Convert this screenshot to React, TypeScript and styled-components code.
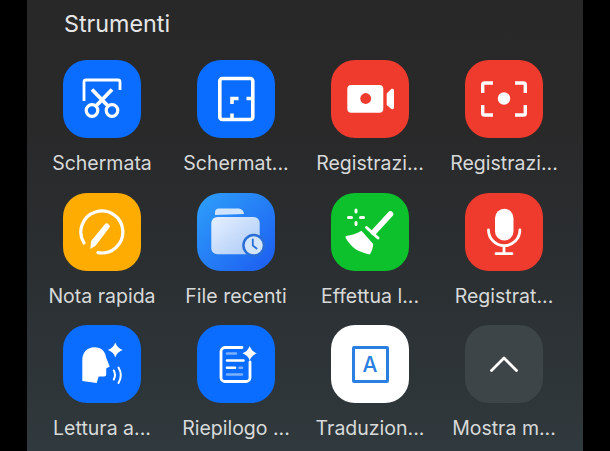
import React from "react";
import styled, { createGlobalStyle } from "styled-components";

const Global = createGlobalStyle`
  html, body { margin: 0; padding: 0; background: #000; }
  #root { width: 610px; height: 451px; overflow: hidden; }
`;

const Page = styled.div`
  width: 610px;
  height: 451px;
  background: #000;
  display: flex;
  padding-left: 27px;
  box-sizing: border-box;
  font-family: Inter, "Liberation Sans", sans-serif;
`;

const Panel = styled.main`
  width: 556px;
  height: 451px;
  box-sizing: border-box;
  padding: 9px 8px 0;
  background: linear-gradient(180deg, #282828 0%, #29292a 30%, #2b3033 65%, #30393d 100%);
  overflow: hidden;
`;

const Title = styled.h2`
  margin: 0 0 0 29px;
  height: 29px;
  font-size: 23.3px;
  line-height: 29px;
  font-weight: 400;
  color: #e6e6e6;
`;

const Grid = styled.div`
  margin-top: 22px;
  display: grid;
  grid-template-columns: repeat(4, 134px);
  grid-auto-rows: 132.5px;
`;

const Tool = styled.div`
  display: flex;
  flex-direction: column;
  align-items: center;
`;

const IconTile = styled.div<{ $bg: string }>`
  width: 78px;
  height: 78px;
  border-radius: 24px;
  background: ${(p) => p.$bg};
  display: flex;
  align-items: center;
  justify-content: center;
`;

const Glyph = styled.svg`
  width: 78px;
  height: 78px;
  display: block;
`;

const Label = styled.span`
  margin-top: 13px;
  font-size: 19.5px;
  line-height: 24px;
  color: #d8dada;
  white-space: nowrap;
`;

const TranslateBox = styled.div`
  width: 37px;
  height: 37px;
  box-sizing: border-box;
  border: 3px solid #2a7fe0;
  border-radius: 2px;
  display: flex;
  align-items: center;
  justify-content: center;
  color: #2a7fe0;
  font-size: 21px;
  font-weight: 500;
`;

const W = "#fff";

const Sparkle = ({ x, y, r }: { x: number; y: number; r: number }) => (
  <path
    fill={W}
    d={`M${x} ${y - r}Q${x + r * 0.25} ${y - r * 0.25} ${x + r} ${y}Q${x + r * 0.25} ${y + r * 0.25} ${x} ${y + r}Q${x - r * 0.25} ${y + r * 0.25} ${x - r} ${y}Q${x - r * 0.25} ${y - r * 0.25} ${x} ${y - r}Z`}
  />
);

const Scissors = () => (
  <Glyph viewBox="0 0 78 78" fill="none" stroke={W} strokeWidth={2.8}>
    <path d="M21 41V22a2 2 0 0 1 2-2h32a2 2 0 0 1 2 2v8" />
    <circle cx="29" cy="50.500" r="5.800" strokeWidth={3.200} />
    <circle cx="49" cy="50.500" r="5.800" strokeWidth={3.200} />
    <path d="M29 29.500 45.500 46.500M49 29.500 32.500 46.500" strokeWidth={3.800} />
  </Glyph>
);

const FloorPlan = () => (
  <Glyph viewBox="0 0 78 78" fill="none" stroke={W} strokeWidth={3.600}>
    <rect x="22.800" y="18.500" width="33" height="41" rx="2.500" />
    <path d="M35 44V38.500H41.500M49.500 38.500H56M35 53.500V60" />
  </Glyph>
);

const Camera = () => (
  <Glyph viewBox="0 0 78 78">
    <rect x="16.300" y="25" width="36" height="27.700" rx="4" fill={W} />
    <circle cx="34.700" cy="38.500" r="5.400" fill="#ef3b2e" />
    <path
      fill={W}
      d="M55.700 33.500 60 29.200c1.200-1 3-.3 3 1.300v17c0 1.600-1.800 2.300-3 1.300L55.700 45Z"
    />
  </Glyph>
);

const FocusFrame = () => (
  <Glyph viewBox="0 0 78 78" fill="none" stroke={W} strokeWidth={3.400}>
    <path d="M28 23H19.500a1.800 1.800 0 0 0-1.800 1.800V33M50 23h8.500a1.800 1.800 0 0 1 1.800 1.800V33M28 55H19.500a1.800 1.800 0 0 1-1.800-1.800V45M50 55h8.500a1.800 1.800 0 0 0 1.800-1.800V45" />
    <circle cx="39" cy="38.500" r="6.200" fill={W} stroke="none" />
  </Glyph>
);

const Note = () => (
  <Glyph viewBox="0 0 78 78" fill="none">
    <path d="M21 50A21 21 0 1 1 35 59.600" stroke={W} strokeWidth={3.200} strokeLinecap="round" />
    <path
      fill={W}
      d="M42.300 30.800c.7-.8 1.600-.7 2.300-.2l1.600 1.400c.7.7.8 1.600.2 2.400L32.600 52.800 27.300 56l.8-8Z"
    />
  </Glyph>
);

const RecentFiles = () => (
  <Glyph viewBox="0 0 78 78">
    <defs>
      <linearGradient id="folderBody" x1="0" y1="0" x2="1" y2="1">
        <stop offset="0" stopColor="#e6f0ff" />
        <stop offset="1" stopColor="#a9c9f7" />
      </linearGradient>
    </defs>
    <path d="M18 22v-2.500a4 4 0 0 1 4-4h20a6 6 0 0 1 5 5.500Z" fill="#cfe3fd" />
    <rect x="14.300" y="24" width="48.400" height="37.300" rx="6" fill="url(#folderBody)" />
    <circle cx="56.700" cy="52.300" r="11.500" fill="#2a6fd8" />
    <circle cx="56.700" cy="52.300" r="9" fill="#d4e4fb" />
    <path d="M55.800 46.500v6l3.800 3" fill="none" stroke="#2a6fd8" strokeWidth="1.800" strokeLinecap="round" />
  </Glyph>
);

const Broom = () => (
  <Glyph viewBox="0 0 78 78" fill="none" stroke={W}>
    <path d="M59.500 21 42.500 39.500" strokeWidth={5.600} strokeLinecap="round" />
    <path d="M35.500 34.500 47 45" strokeWidth={3} strokeLinecap="round" />
    <path
      fill={W}
      stroke="none"
      d="M15 43c5.500-.6 10.500-2.400 15.500-5.200l11.700 13.200c-.2 4-1.500 7.500-3.500 10.500-5.500-1.200-10-2.800-13.700-5-4.500-3.200-8-7.500-10-11-.6-1.200-.4-2.300 0-2.500Z"
    />
    <path
      d="M25 17v2M25 29.500v2M17.500 24.500h3M29.500 24.500h3"
      strokeWidth={3}
      strokeLinecap="round"
    />
  </Glyph>
);

const Mic = () => (
  <Glyph viewBox="0 0 78 78" fill="none" stroke={W} strokeWidth={2.800}>
    <rect x="30" y="15.700" width="18.500" height="31.700" rx="9.200" fill={W} stroke="none" />
    <path d="M23.500 37a15.700 15.700 0 0 0 31.400 0M39 52.700v8M31 60.700h16" strokeLinecap="round" />
  </Glyph>
);

const Reader = () => (
  <Glyph viewBox="0 0 78 78" fill="none">
    <path
      fill={W}
      d="M19.300 56V35C19.300 27.500 24 22.200 31.500 22.200c6.500 0 11 4 11.500 10l3.700 9.200-3.500 2v6c0 1.200-.8 2-2 2h-5.500l-2 6.600Z"
    />
    <Sparkle x={52.300} y={25} r={7.400} />
    <path d="M50.800 45.500c1.600 3 1.600 6 0 9M55.500 42.500c3 5 3 10.500 0 15.500" stroke={W} strokeWidth={2} strokeLinecap="round" />
  </Glyph>
);

const Summary = () => (
  <Glyph viewBox="0 0 78 78" fill="none" strokeLinecap="round">
    <path d="M45 22.500H28a4 4 0 0 0-4 4v26a4 4 0 0 0 4 4h21a4 4 0 0 0 4-4V37" stroke={W} strokeWidth={2.800} />
    <path d="M30 28.500h9M30 49.500h15M42.500 42.700h2.500" stroke="#7fb0ff" strokeWidth={2.600} />
    <path d="M30 35.500h16.500M30 42.700h8" stroke={W} strokeWidth={2.600} />
    <Sparkle x={52.700} y={28.300} r={7.200} />
  </Glyph>
);

const Chevron = () => (
  <Glyph viewBox="0 0 78 78" fill="none" stroke={W} strokeWidth={2.800} strokeLinecap="round" strokeLinejoin="round">
    <path d="M26.500 45.500 39 33l12.500 12.500" />
  </Glyph>
);

const BLUE = "#0a6dff";
const RED = "#ef3b2e";

const tools: { label: string; bg: string; icon: React.ReactNode }[] = [
  { label: "Schermata", bg: BLUE, icon: <Scissors /> },
  { label: "Schermat...", bg: BLUE, icon: <FloorPlan /> },
  { label: "Registrazi...", bg: RED, icon: <Camera /> },
  { label: "Registrazi...", bg: RED, icon: <FocusFrame /> },
  { label: "Nota rapida", bg: "#ffac02", icon: <Note /> },
  { label: "File recenti", bg: "linear-gradient(135deg, #2ea0fb 0%, #1c5cf0 100%)", icon: <RecentFiles /> },
  { label: "Effettua l...", bg: "#0cc12c", icon: <Broom /> },
  { label: "Registrat...", bg: RED, icon: <Mic /> },
  { label: "Lettura a...", bg: BLUE, icon: <Reader /> },
  { label: "Riepilogo ...", bg: BLUE, icon: <Summary /> },
  { label: "Traduzion...", bg: "#ffffff", icon: <TranslateBox>A</TranslateBox> },
  { label: "Mostra m...", bg: "#3e4549", icon: <Chevron /> },
];

export default function App() {
  return (
    <Page>
      <Global />
      <Panel>
        <Title>Strumenti</Title>
        <Grid>
          {tools.map((t, i) => (
            <Tool key={i}>
              <IconTile $bg={t.bg}>{t.icon}</IconTile>
              <Label>{t.label}</Label>
            </Tool>
          ))}
        </Grid>
      </Panel>
    </Page>
  );
}
